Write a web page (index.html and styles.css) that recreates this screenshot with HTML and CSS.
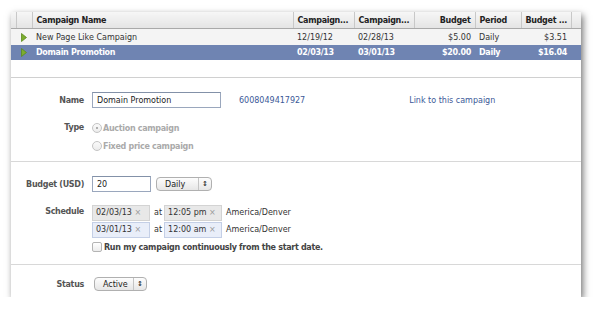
FILE: index.html
```html
<!DOCTYPE html>
<html lang="en">
<head>
  <meta charset="UTF-8">
  <title>Campaigns</title>
  <link rel="stylesheet" href="styles.css">
</head>
<body>
  <div class="window">
    <div class="list">
      <table class="grid">
        <colgroup>
          <col style="width:5px"><col style="width:16px"><col style="width:261px"><col style="width:61px"><col style="width:60px"><col style="width:61px"><col style="width:46px"><col style="width:50px"><col style="width:10px">
        </colgroup>
        <thead>
          <tr>
            <th></th><th></th><th>Campaign Name</th><th>Campaign...</th><th>Campaign...</th><th class="num">Budget</th><th>Period</th><th class="num">Budget ...</th><th></th>
          </tr>
        </thead>
        <tbody>
          <tr>
            <td></td>
            <td class="arrow"><svg width="6" height="9" viewBox="0 0 6 9"><polygon points="0.5,0.5 5.5,4.5 0.5,8.5" fill="#7cad2e" stroke="#5a8a1c" stroke-width="0.8"/></svg></td>
            <td>New Page Like Campaign</td><td>12/19/12</td><td>02/28/13</td><td class="num">$5.00</td><td>Daily</td><td class="num">$3.51</td><td></td>
          </tr>
          <tr class="selected">
            <td></td>
            <td class="arrow"><svg width="6" height="9" viewBox="0 0 6 9"><polygon points="0.5,0.5 5.5,4.5 0.5,8.5" fill="#7cad2e" stroke="#5a8a1c" stroke-width="0.8"/></svg></td>
            <td>Domain Promotion</td><td>02/03/13</td><td>03/01/13</td><td class="num">$20.00</td><td>Daily</td><td class="num">$16.04</td><td></td>
          </tr>
        </tbody>
      </table>
    </div>

    <div class="section first">
      <div class="field">
        <div class="label">Name</div>
        <input class="text name" type="text" value="Domain Promotion">
        <span class="campaign-id">6008049417927</span>
        <a class="link">Link to this campaign</a>
      </div>
      <div class="field type">
        <div class="label">Type</div>
        <div class="radios">
          <div class="radio-line"><span class="radio on"></span>Auction campaign</div>
          <div class="radio-line"><span class="radio"></span>Fixed price campaign</div>
        </div>
      </div>
    </div>

    <div class="section second">
      <div class="field">
        <div class="label">Budget (USD)</div>
        <input class="text budget" type="text" value="20">
        <div class="select daily"><span>Daily</span><span class="updown">&#8597;</span></div>
      </div>
      <div class="field schedule">
        <div class="label">Schedule</div>
        <div class="sched-rows">
          <div class="sched-row">
            <span class="chip date">02/03/13 <i>&times;</i></span>
            <span class="at">at</span>
            <span class="chip time">12:05 pm <i>&times;</i></span>
            <span class="tz">America/Denver</span>
          </div>
          <div class="sched-row">
            <span class="chip date blue">03/01/13 <i>&times;</i></span>
            <span class="at">at</span>
            <span class="chip time blue">12:00 am <i>&times;</i></span>
            <span class="tz">America/Denver</span>
          </div>
          <div class="check-line"><span class="check"></span>Run my campaign continuously from the start date.</div>
        </div>
      </div>
    </div>

    <div class="section third">
      <div class="field">
        <div class="label">Status</div>
        <div class="select active"><span>Active</span><span class="updown">&#8597;</span></div>
      </div>
    </div>
  </div>
</body>
</html>
```

FILE: styles.css
```css
body { margin:0; background:#fff; font-family:'DejaVu Sans',Verdana,sans-serif; font-size:8px; color:#333; }
.window { margin:12px 0 0 11px; width:570px; height:285px; background:#fff; box-shadow:2px 3px 7px rgba(0,0,0,0.55); overflow:hidden; }

.list { height:65px; border-bottom:1px solid #d0d0d0; }
.grid { border-collapse:collapse; table-layout:fixed; width:570px; }
.grid th { height:16px; padding:0 4px; text-align:left; font-weight:bold; letter-spacing:-0.3px; color:#222; background:linear-gradient(#f6f6f6,#e4e4e4); border-bottom:1px solid #a9a9a9; border-right:1px solid #c8c8c8; white-space:nowrap; overflow:hidden; }
.grid th:last-child { border-right:none; }
.grid td { height:16px; padding:0 4px; white-space:nowrap; overflow:hidden; background:#f4f4f4; color:#333; }
.grid .num { text-align:right; }
.grid td.arrow { padding:0 0 0 5px; }
.grid td.arrow svg { display:block; }
.grid tr.selected td { height:15px; background:#6f84b2; color:#fff; font-weight:bold; letter-spacing:-0.3px; }

.section { border-top:1px solid #d8d8d8; }
.section.first { border-top:none; padding:14px 0 9px; }
.section.second { padding:14px 0 11px; }
.section.third { padding:12px 0 7px; }

.field { display:flex; align-items:center; }
.label { width:73px; margin-right:8px; flex:none; text-align:right; font-weight:bold; letter-spacing:-0.3px; color:#555; }

.text { box-sizing:border-box; height:16px; border:1px solid #9aa7bd; border-top-color:#8391a8; padding:0 4px; font:inherit; color:#222; background:#fff; }
.text.name { width:129px; font-size:8px; }
.text.budget { width:59px; }
.campaign-id { margin-left:18px; color:#3b5998; }
.link { margin-left:104px; color:#3b5998; cursor:pointer; }

.field.type { align-items:flex-start; margin-top:14px; }
.field.type .label { line-height:12px; }
.radios { display:flex; flex-direction:column; gap:6px; }
.radio-line { display:flex; align-items:center; height:12px; color:#aaa; font-weight:bold; letter-spacing:-0.3px; }
.radio { box-sizing:border-box; width:10px; height:10px; border:1px solid #c4c4c4; border-radius:50%; margin-right:1px; background:linear-gradient(#fafafa,#ececec); display:flex; align-items:center; justify-content:center; }
.radio.on::after { content:""; width:2px; height:2px; border-radius:50%; background:#999; }

.select { box-sizing:border-box; height:14px; display:flex; align-items:center; justify-content:space-between; border:1px solid #b0b0b0; border-radius:4px; background:linear-gradient(#fdfdfd,#e6e6e6); color:#222; padding:0 0 0 8px; }
.select.daily { width:56px; margin-left:5px; }
.select.active { width:53px; margin-left:2px; }
.updown { width:12px; height:100%; border-left:1px solid #c4c4c4; display:flex; align-items:center; justify-content:center; font-size:7px; font-weight:bold; color:#333; }

.field.schedule { align-items:flex-start; margin-top:12px; }
.field.schedule .label { line-height:16px; }
.sched-rows { display:flex; flex-direction:column; }
.sched-row { display:flex; align-items:center; height:17px; }
.chip { box-sizing:border-box; height:16px; display:flex; align-items:center; padding:0 3px; background:#e8e8e8; border:1px solid #d3d3d3; color:#333; white-space:pre; }
.chip i { font-style:normal; color:#9a9a9a; }
.chip.blue { background:#e9eef9; border-color:#c4cfe6; }
.chip.date { width:58px; }
.chip.time { width:58px; }
.at { margin:0 2px 0 4px; color:#333; }
.tz { margin-left:4px; color:#333; }
.check-line { display:flex; align-items:center; height:12px; margin-top:3px; font-weight:bold; letter-spacing:-0.3px; color:#444; }
.check { box-sizing:border-box; width:10px; height:10px; border:1px solid #b4b4b4; border-radius:2px; margin-right:2px; background:linear-gradient(#fff,#ececec); }
```
